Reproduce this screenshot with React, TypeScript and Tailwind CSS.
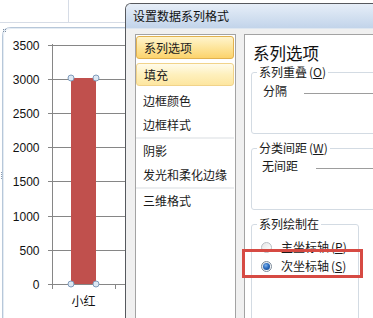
import React from "react";

const ticks = [3500, 3000, 2500, 2000, 1500, 1000, 500, 0];
const yOf = (v: number) => Math.round(284 - (v / 3500) * 239.5) + 0.5;

const listItems: { t: string; state?: "sel" | "hover"; sep?: boolean }[] = [
  { t: "系列选项", state: "sel" },
  { t: "填充", state: "hover" },
  { t: "边框颜色" },
  { t: "边框样式", sep: true },
  { t: "阴影" },
  { t: "发光和柔化边缘", sep: true },
  { t: "三维格式" },
];

const Chart: React.FC = () => (
  <svg width="125" height="318" viewBox="0 0 125 318" className="block">
    <rect x="0" y="0" width="125" height="318" fill="#ffffff" />
    {/* sheet cells behind the chart */}
    <line x1="0" y1="22.5" x2="125" y2="22.5" stroke="#d6dce6" />
    <line x1="68.5" y1="0" x2="68.5" y2="22" stroke="#d6dce6" />
    {/* chart frame */}
    <path d="M2.5 318 V36 Q2.5 27.5 11 27.5 H125" fill="#ffffff" stroke="#b7c7d9" />
    <path d="M3.5 318 V36 Q3.5 28.5 11 28.5 H125" fill="none" stroke="#e4ecf4" />
    {[0, 1].map((r) =>
      [0, 1].map((c) => (
        <rect key={`${r}${c}`} x={3 + c * 2} y={29 + r * 2} width="1" height="1" fill="#7d8ea3" />
      ))
    )}
    {[0, 1, 2, 3].map((i) => (
      <rect key={i} x="1" y={172 + i * 2} width="1" height="1" fill="#8a9bb0" />
    ))}
    {/* gridlines */}
    {ticks.map((v) => (
      <line key={v} x1="48" y1={yOf(v)} x2="125" y2={yOf(v)} stroke="#868686" />
    ))}
    <line x1="52.5" y1="44" x2="52.5" y2="289" stroke="#868686" />
    <line x1="115.5" y1="284" x2="115.5" y2="289" stroke="#868686" />
    {/* bar */}
    <rect x="71" y="78" width="25" height="206" fill="#c0504d" />
    {[
      [71, 78],
      [96, 78],
      [71, 284],
      [96, 284],
    ].map(([x, y]) => (
      <circle key={`${x}-${y}`} cx={x} cy={y} r="3" fill="#dde8f3" stroke="#7f9bbb" strokeWidth="1" />
    ))}
    {ticks.map((v) => (
      <text
        key={v}
        x="39.5"
        y={yOf(v) + 4}
        textAnchor="end"
        fontSize="12"
        fill="#111"
        fontFamily="'Liberation Sans', Arial, sans-serif"
      >
        {v}
      </text>
    ))}
    <text
      x="83.5"
      y="306"
      textAnchor="middle"
      fontSize="12"
      fill="#111"
      fontFamily="'Noto Sans CJK SC', sans-serif"
    >
      小红
    </text>
  </svg>
);

const Radio: React.FC<{ checked?: boolean }> = ({ checked }) => (
  <span
    className={`w-[11px] h-[11px] rounded-full border flex items-center justify-center shrink-0 ${
      checked ? "border-[#7c8a99] bg-gradient-to-br from-[#dfe6ee] to-white" : "border-[#b9bec4] bg-gradient-to-br from-[#e6e6e6] to-white"
    }`}
  >
    {checked && (
      <span className="w-[7px] h-[7px] rounded-full bg-[radial-gradient(circle_at_40%_35%,#7fb2ea_0%,#2a6cc0_45%,#163f7c_100%)]" />
    )}
  </span>
);

const Key: React.FC<{ k: string }> = ({ k }) => (
  <span className="ml-[2px]">
    (<span className="underline underline-offset-1">{k}</span>)
  </span>
);

export default function App() {
  return (
    <div className="relative w-[373px] h-[318px] overflow-hidden bg-white flex font-['Noto_Sans_CJK_SC',sans-serif] text-[#1a1a1a]">
      <div className="w-[125px] h-full shrink-0">
        <Chart />
      </div>

      {/* dialog window */}
      <div className="flex-1 pt-[3px] flex flex-col min-w-0">
        <div className="flex-1 flex flex-col border-t border-l border-[#56595e] rounded-tl-[6px] overflow-hidden">
          <div className="h-[24px] shrink-0 flex items-center pl-[7px] bg-gradient-to-b from-[#e6eef8] to-[#c2d4ea] text-[12px] leading-[16px] text-[#111]">
            设置数据系列格式
          </div>
          <div className="flex-1 flex bg-[#f0f0f0] pt-[5px] pl-[9px] gap-[8px] border-t border-[#dde6f0]">
            {/* category list */}
            <div className="w-[101px] shrink-0 bg-white border border-b-0 border-[#a3a3a3] pt-[1px] pr-[1px] text-[12px] leading-[16px]">
              {listItems.map((it, i) => (
                <React.Fragment key={it.t}>
                  <div
                    className={`flex items-center pl-[7px] ${
                      i < 2 ? "h-[23px]" : "h-[24px]"
                    } ${i === 0 ? "mb-[4px]" : i === 1 ? "mb-[3px]" : ""} ${
                      it.state === "sel"
                        ? "rounded-[3px] border border-[#e2b24f] bg-gradient-to-b from-[#fff4cc] via-[#fde59c] to-[#fcd36b] pl-[6px]"
                        : it.state === "hover"
                        ? "rounded-[3px] border border-[#f1d38a] bg-gradient-to-b from-[#fffbea] via-[#fef0bd] to-[#fde6a0] pl-[6px]"
                        : ""
                    }`}
                  >
                    {it.t}
                  </div>
                  {it.sep && <div className="h-[2px] bg-[#eceef0]" />}
                </React.Fragment>
              ))}
            </div>

            {/* options panel */}
            <div className="flex-1 min-w-0 bg-white border-l border-t border-[#a3a3a3] pt-[7px] pl-[6px] overflow-hidden text-[12px] leading-[16px]">
              <div className="pl-[2px] text-[16.5px] leading-[22px] text-[#111]">系列选项</div>

              <fieldset className="w-[150px] border border-[#d3dbe3] rounded-[3px]">
                <legend className="ml-[5px] px-[2px] text-[12px] leading-[16px]">
                  系列重叠<Key k="O" />
                </legend>
                <div className="h-[53px] pl-[11px] pt-[3px]">
                  <div className="flex items-center">
                    <span>分隔</span>
                    <span className="flex-1 ml-[17px] mt-[5px] h-px bg-[#9d9d9d]" />
                  </div>
                </div>
              </fieldset>

              <fieldset className="w-[150px] mt-[6px] border border-[#d3dbe3] rounded-[3px]">
                <legend className="ml-[5px] px-[2px] text-[12px] leading-[16px]">
                  分类间距<Key k="W" />
                </legend>
                <div className="h-[53px] pl-[10px] pt-[2px]">
                  <div className="flex items-center">
                    <span>无间距</span>
                    <span className="flex-1 ml-[18px] mt-[5px] h-px bg-[#9d9d9d]" />
                  </div>
                </div>
              </fieldset>

              <fieldset className="w-[108px] mt-[6px] border border-[#d3dbe3] rounded-[3px]">
                <legend className="ml-[5px] px-[2px] text-[12px] leading-[16px]">系列绘制在</legend>
                <div className="h-[100px] pl-[9px] pt-[7px] flex flex-col gap-[3px]">
                  <div className="flex items-center gap-[9px] h-[16px]">
                    <Radio />
                    <span>
                      主坐标轴<Key k="P" />
                    </span>
                  </div>
                  <div className="flex items-center gap-[9px] h-[16px]">
                    <Radio checked />
                    <span>
                      次坐标轴<Key k="S" />
                    </span>
                  </div>
                </div>
              </fieldset>
            </div>
          </div>
        </div>
      </div>

      {/* red highlight annotation */}
      <div className="absolute left-[242px] top-[249px] w-[121px] h-[29px] border-[3px] border-[#d64a43]" />
    </div>
  );
}
